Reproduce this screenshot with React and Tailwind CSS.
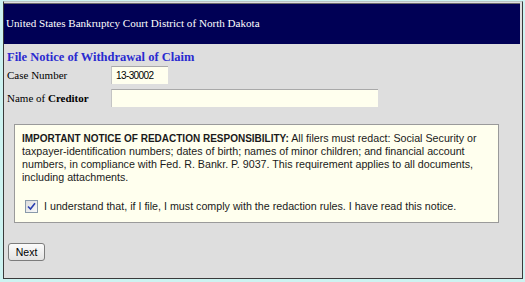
export default function App() {
  const serif = { fontFamily: '"Liberation Serif", "Times New Roman", serif' };
  const sans = { fontFamily: '"Liberation Sans", Arial, sans-serif' };
  return (
    <div className="w-[525px] h-[282px] bg-[#cdf3f1] pt-px overflow-hidden">
      <div className="ml-[3px] w-[520px] h-[278px] bg-[#dedede] border-l border-r border-b border-[#3a3a3a] border-t border-t-[#b9c4c4] pt-[1px]">
        <div className="w-[516px] h-[41px] bg-[#000055] border-t border-[#6b6b6b] flex items-center pl-[2px]">
          <span className="text-white text-[11.1px] leading-none" style={serif}>
            United States Bankruptcy Court District of North Dakota
          </span>
        </div>
        <div className="pl-[3px]">
          <div className="mt-[6px] text-[12.5px] font-bold text-[#2a2ad0] leading-[14px]" style={serif}>
            File Notice of Withdrawal of Claim
          </div>
          <div className="mt-[2px] flex items-center h-[18px]">
            <div className="w-[104px] text-[11px] text-black leading-none" style={serif}>Case Number</div>
            <div className="w-[57px] h-[18px] bg-[#ffffee] border-t border-l border-t-[#a9a9a9] border-l-[#c4c4c4] flex items-center pl-[4px] text-[10px] tracking-[-0.6px] text-black" style={sans}>
              13-30002
            </div>
          </div>
          <div className="mt-[5px] flex items-center h-[18px]">
            <div className="w-[104px] text-[11px] text-black leading-none" style={serif}>
              Name of <b>Creditor</b>
            </div>
            <div className="w-[267px] h-[18px] bg-[#ffffee] border-t border-l border-t-[#a9a9a9] border-l-[#c4c4c4]"></div>
          </div>
          <div className="mt-[17px] ml-[7px] w-[485px] h-[99px] bg-[#ffffee] border border-[#9a9a9a] pl-[7px] pr-[2px] pt-[7px] text-[10.7px] leading-[13px] text-[#1a1a1a] whitespace-nowrap" style={sans}>
            <p>
              <b className="text-[10px]">IMPORTANT NOTICE OF REDACTION RESPONSIBILITY:</b> All filers must redact: Social Security or
              <br />
              taxpayer-identification numbers; dates of birth; names of minor children; and financial account
              <br />
              numbers, in compliance with Fed. R. Bankr. P. 9037. This requirement applies to all documents,
              <br />
              including attachments.
            </p>
            <div className="mt-[16px] flex items-center">
              <div className="ml-[3px] w-[13px] h-[13px] border border-[#8a9aaa] bg-gradient-to-br from-[#dcdcdc] to-[#fafafa] flex items-center justify-center">
                <svg width="9" height="9" viewBox="0 0 9 9">
                  <path d="M1 4.5 L3.5 7 L8 1.2" fill="none" stroke="#2a3fb0" strokeWidth="1.6" />
                </svg>
              </div>
              <span className="ml-[6px]">
                I understand that, if I file, I must comply with the redaction rules. I have read this notice.
              </span>
            </div>
          </div>
          <div className="mt-[15px] ml-[1px]">
            <button className="w-[37px] h-[18px] rounded-[3px] border border-[#7c7c7c] bg-gradient-to-b from-[#fbfbfb] to-[#e3e3e3] text-[10.5px] text-black leading-none" style={sans}>
              Next
            </button>
          </div>
        </div>
      </div>
    </div>
  );
}
